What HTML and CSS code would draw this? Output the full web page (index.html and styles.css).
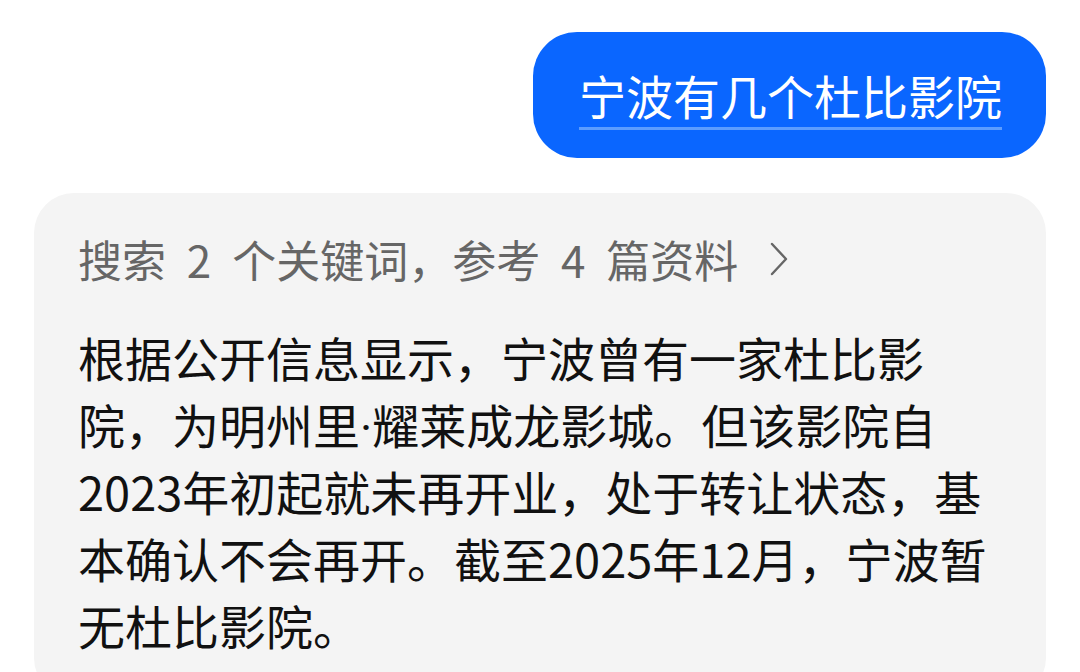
FILE: index.html
```html
<!DOCTYPE html>
<html lang="zh-CN">

<head>
    <meta charset="UTF-8">
    <meta name="viewport" content="width=device-width, initial-scale=1.0">
    <title>宁波有几个杜比影院</title>
    <link rel="stylesheet" href="styles.css">
</head>

<body>
    <div class="chat">
        <!-- 用户提问 -->
        <div class="bubble">
            <span class="question">宁波有几个杜比影院</span>
        </div>

        <!-- 回答卡片 -->
        <div class="answer">
            <div class="sources">
                <span>搜索 2 个关键词，参考 4 篇资料</span>
                <svg class="chevron" width="22" height="36" viewBox="0 0 22 36">
                    <path d="M4 3 L18 18 L4 33" fill="none" stroke="#666" stroke-width="2.4" stroke-linecap="round" stroke-linejoin="round"/>
                </svg>
            </div>
            <p class="reply">根据公开信息显示，宁波曾有一家杜比影院，为明州里<span class="dot">·</span>耀莱成龙影城。但该影院自2023年初起就未再开业，处于转让状态，基本确认不会再开。截至2025年12月，宁波暂无杜比影院。</p>
        </div>
    </div>
</body>

</html>
```

FILE: styles.css
```css
body {
    margin: 0;
    background-color: #ffffff;
    font-family: "Noto Sans CJK SC", "Noto Sans", sans-serif;
}

.chat {
    display: flex;
    flex-direction: column;
    padding: 32px 34px 0 34px;
    gap: 35px;
}

.bubble {
    align-self: flex-end;
    background-color: #0a66ff;
    color: #ffffff;
    border-radius: 44px;
    padding: 32px 44px 32px 46px;
    font-size: 47px;
    line-height: 62px;
}

.question {
    text-decoration: underline;
    text-decoration-color: #5c9dff;
    text-decoration-thickness: 3px;
    text-underline-offset: 12px;
}

.answer {
    background-color: #f4f4f4;
    border-radius: 40px;
    padding: 36px 54px 40px 44px;
}

.sources {
    display: flex;
    align-items: center;
    gap: 30px;
    color: #666666;
    font-size: 44px;
    line-height: 60px;
    word-spacing: 11px;
}

.chevron {
    display: block;
}

.reply {
    margin: 34px 0 0 0;
    color: #111111;
    font-size: 47px;
    line-height: 67px;
}

.dot {
    font-family: Roboto, "Liberation Sans", sans-serif;
    line-height: 0;
}
```
